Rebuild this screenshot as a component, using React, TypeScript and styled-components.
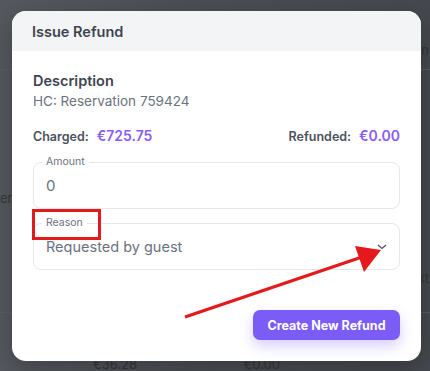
import styled, { createGlobalStyle } from "styled-components";

const GlobalStyle = createGlobalStyle`
  html, body {
    margin: 0;
    padding: 0;
    width: 430px;
    height: 371px;
    overflow: hidden;
    font-family: "Inter", "Noto Sans", sans-serif;
  }
`;

const Page = styled.div`
  position: relative;
  width: 430px;
  height: 371px;
  background: linear-gradient(90deg, #55585e 0%, #4a4d53 50%, #45484e 100%);
  overflow: hidden;
`;

const Behind = styled.div`
  display: flex;
  flex-direction: column;
  color: #2f3136;
  font-size: 13px;
  opacity: 0.8;
`;

const BehindRow = styled.div<{ $h: number; $line?: boolean }>`
  display: flex;
  justify-content: space-between;
  align-items: center;
  height: ${(p) => p.$h}px;
  box-sizing: border-box;
  border-bottom: ${(p) => (p.$line ? "1px solid #5c5f65" : "none")};
`;

const Cell = styled.span<{ $ml?: number; $mr?: number }>`
  margin-left: ${(p) => p.$ml || 0}px;
  margin-right: ${(p) => p.$mr || 0}px;
  white-space: nowrap;
`;

const Modal = styled.div`
  position: absolute;
  left: 12px;
  top: 11px;
  width: 409px;
  height: 350px;
  background: #ffffff;
  border-radius: 14px;
  overflow: hidden;
  display: flex;
  flex-direction: column;
  box-shadow: 0 8px 24px rgba(0, 0, 0, 0.25);
`;

const Header = styled.div`
  height: 40px;
  display: flex;
  align-items: center;
  padding-left: 20px;
  background: #f3f4f6;
  font-size: 14.5px;
  font-weight: 600;
  color: #3f4450;
`;

const Body = styled.div`
  position: relative;
  flex: 1;
  display: flex;
  flex-direction: column;
  padding: 20px 21px 21px 21px;
`;

const Title = styled.div`
  font-size: 14.5px;
  font-weight: 600;
  line-height: 20px;
  color: #3d4451;
`;

const Sub = styled.div`
  font-size: 13.5px;
  line-height: 20px;
  color: #6b7280;
`;

const Totals = styled.div`
  display: flex;
  justify-content: space-between;
  align-items: center;
  margin-top: 16px;
  line-height: 18px;
`;

const Total = styled.div`
  display: flex;
  gap: 8px;
  align-items: baseline;
`;

const TotalLabel = styled.span`
  font-size: 12.5px;
  font-weight: 600;
  color: #4b5160;
`;

const TotalValue = styled.span`
  font-size: 14px;
  font-weight: 600;
  color: #8b5cf6;
`;

const Field = styled.div<{ $mt: number; $h: number }>`
  position: relative;
  margin-top: ${(p) => p.$mt}px;
  height: ${(p) => p.$h}px;
  border: 1px solid #e5e7eb;
  border-radius: 8px;
  display: flex;
  align-items: center;
  padding: 0 12px;
  box-sizing: border-box;
`;

const FieldLabel = styled.span`
  position: absolute;
  left: 8px;
  top: -8px;
  padding: 0 4px;
  background: #ffffff;
  font-size: 10.5px;
  line-height: 14px;
  color: #6b7280;
`;

const FieldValue = styled.span<{ $size: number }>`
  flex: 1;
  font-size: ${(p) => p.$size}px;
  color: #6b7280;
`;

const Highlight = styled.div`
  position: absolute;
  left: -2px;
  top: -15px;
  width: 63px;
  height: 25px;
  border: 3px solid #e5191b;
  pointer-events: none;
`;

const Footer = styled.div`
  margin-top: auto;
  display: flex;
  justify-content: flex-end;
`;

const Button = styled.button`
  height: 30px;
  width: 147px;
  border: none;
  border-radius: 7px;
  background: #7b5cf6;
  color: #ffffff;
  font-family: inherit;
  font-size: 12.5px;
  font-weight: 700;
  box-shadow: 0 6px 14px rgba(123, 92, 246, 0.3);
  cursor: pointer;
`;

const Arrow = styled.svg`
  position: absolute;
  left: 0;
  top: 0;
  pointer-events: none;
`;

function Chevron() {
  return (
    <svg width="10" height="6" viewBox="0 0 10 6">
      <path d="M1 1 L5 4.5 L9 1" fill="none" stroke="#4b5563" strokeWidth="1.3" />
    </svg>
  );
}

export default function App(): JSX.Element {
  return (
    <Page>
      <GlobalStyle />
      <Behind>
        <BehindRow $h={40} />
        <BehindRow $h={20}>
          <Cell />
          <Cell $mr={1}>n</Cell>
        </BehindRow>
        <BehindRow $h={10} $line />
        <BehindRow $h={118} />
        <BehindRow $h={20}>
          <Cell $ml={0}>er 2</Cell>
        </BehindRow>
        <BehindRow $h={60} />
        <BehindRow $h={20}>
          <Cell />
          <Cell $mr={1}>xt</Cell>
        </BehindRow>
        <BehindRow $h={25} $line />
        <BehindRow $h={41} />
        <BehindRow $h={20}>
          <Cell $ml={93}>€36.28</Cell>
          <Cell $mr={150}>€0.00</Cell>
        </BehindRow>
      </Behind>
      <Modal>
        <Header>Issue Refund</Header>
        <Body>
          <Title>Description</Title>
          <Sub>HC: Reservation 759424</Sub>
          <Totals>
            <Total>
              <TotalLabel>Charged:</TotalLabel>
              <TotalValue>€725.75</TotalValue>
            </Total>
            <Total>
              <TotalLabel>Refunded:</TotalLabel>
              <TotalValue>€0.00</TotalValue>
            </Total>
          </Totals>
          <Field $mt={16} $h={47}>
            <FieldLabel>Amount</FieldLabel>
            <FieldValue $size={15}>0</FieldValue>
          </Field>
          <Field $mt={14} $h={47}>
            <FieldLabel>Reason</FieldLabel>
            <FieldValue $size={14.5}>Requested by guest</FieldValue>
            <Chevron />
            <Highlight />
          </Field>
          <Footer>
            <Button>Create New Refund</Button>
          </Footer>
        </Body>
      </Modal>
      <Arrow width="430" height="371" viewBox="0 0 430 371">
        <line x1="185" y1="317" x2="362" y2="257" stroke="#e5191b" strokeWidth="3.2" />
        <polygon points="381,250 355,246 364,272" fill="#e5191b" />
      </Arrow>
    </Page>
  );
}
